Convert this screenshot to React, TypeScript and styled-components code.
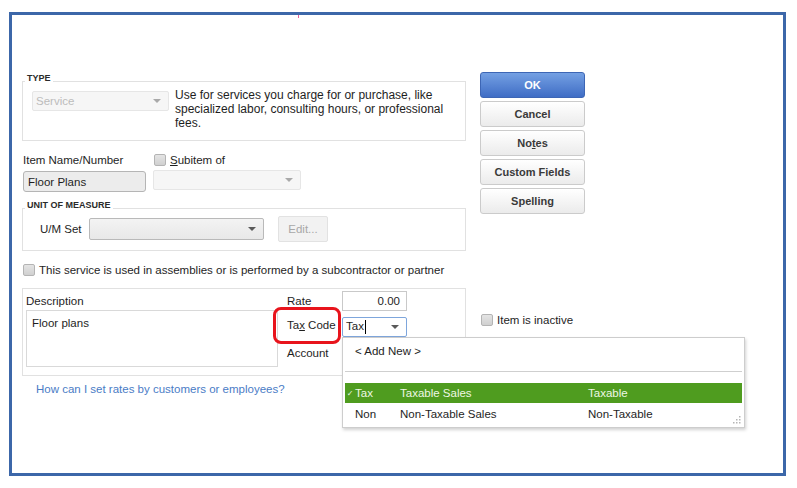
import React from "react";
import styled, { createGlobalStyle } from "styled-components";

const GlobalStyle = createGlobalStyle`
  html, body {
    margin: 0;
    padding: 0;
    background: #fff;
  }
  body {
    font-family: "Liberation Sans", Arial, sans-serif;
    font-size: 11.5px;
    color: #1e1e1e;
  }
`;

const Frame = styled.div`
  position: relative;
  box-sizing: border-box;
  width: 777px;
  height: 464px;
  margin: 12px 0 0 9px;
  border: 3px solid #3c67a9;
  padding: 57px 0 0 10px;
  display: flex;
  gap: 14px;
  align-items: flex-start;
`;

const Tick = styled.span`
  position: absolute;
  left: 286px;
  top: 0;
  width: 1px;
  height: 3px;
  background: #e7609a;
`;

const LeftCol = styled.div`
  width: 444px;
  display: flex;
  flex-direction: column;
`;

const RightCol = styled.div`
  width: 105px;
  display: flex;
  flex-direction: column;
`;

const GroupBox = styled.div`
  position: relative;
  border: 1px solid #e1e1e1;
`;

const GroupTitle = styled.span`
  position: absolute;
  left: 2px;
  top: -9px;
  padding: 0 2px;
  background: #fff;
  font-size: 9px;
  font-weight: bold;
  line-height: 10px;
  color: #2a2a2a;
`;

const TypeBox = styled(GroupBox)`
  margin-top: 9px;
  padding: 9px 10px 10px 9px;
  display: flex;
  gap: 6px;
  align-items: flex-start;
`;

const TypeText = styled.div`
  margin-top: -3px;
  font-size: 12px;
  line-height: 14px;
`;

const Select = styled.div<{ $w: number; $h?: number; $variant?: "disabled" | "plain" | "focus" }>`
  position: relative;
  box-sizing: border-box;
  flex: none;
  width: ${(p) => p.$w}px;
  height: ${(p) => p.$h ?? 20}px;
  display: flex;
  align-items: center;
  justify-content: space-between;
  padding: 0 7px 0 3px;
  border-radius: 2px;
  border: 1px solid
    ${(p) => (p.$variant === "focus" ? "#7ea6dc" : p.$variant === "plain" ? "#b9b9b9" : "#e6e6e6")};
  background: ${(p) =>
    p.$variant === "focus"
      ? "#fff"
      : p.$variant === "plain"
      ? "linear-gradient(#f3f3f3, #e8e8e8)"
      : "#f6f6f6"};
  color: ${(p) => (p.$variant === "disabled" ? "#bcbcbc" : "#1e1e1e")};
`;

const Arrow = styled.span<{ $muted?: boolean }>`
  width: 0;
  height: 0;
  border-left: 4px solid transparent;
  border-right: 4px solid transparent;
  border-top: 4px solid ${(p) => (p.$muted ? "#a9a9a9" : "#5a5a5a")};
`;

const NameRow = styled.div`
  margin-top: 12px;
  display: flex;
  gap: 7px;
  padding-left: 1px;
`;

const Column = styled.div`
  display: flex;
  flex-direction: column;
`;

const Label = styled.span`
  line-height: 14px;
  white-space: nowrap;
`;

const ItemInput = styled.div`
  margin-top: 4px;
  box-sizing: border-box;
  width: 123px;
  height: 21px;
  border: 1px solid #b5b5b5;
  border-radius: 3px;
  background: #ececec;
  padding: 0 4px;
  display: flex;
  align-items: center;
`;

const CheckRow = styled.div<{ $mt?: number }>`
  margin-top: ${(p) => p.$mt ?? 0}px;
  display: flex;
  align-items: center;
  gap: 4px;
  height: 14px;
  padding-left: 1px;
`;

const Check = styled.span`
  box-sizing: border-box;
  flex: none;
  width: 12px;
  height: 12px;
  border: 1px solid #b4b4b4;
  border-radius: 2px;
  background: linear-gradient(#e4e4e4, #d0d0d0);
`;

const SubitemSelect = styled(Select)`
  margin-top: 3px;
`;

const UomBox = styled(GroupBox)`
  margin-top: 16px;
  padding: 7px 10px 8px 17px;
  display: flex;
  align-items: center;
`;

const UomLabel = styled.span`
  width: 49px;
  line-height: 14px;
`;

const EditButton = styled.div`
  box-sizing: border-box;
  margin-left: 14px;
  width: 50px;
  height: 26px;
  border: 1px solid #e2e2e2;
  border-radius: 2px;
  background: #f2f2f2;
  color: #a8a8a8;
  display: flex;
  align-items: center;
  justify-content: center;
`;

const DetailBox = styled.div`
  margin-top: 11px;
  border: 1px solid #e1e1e1;
  padding: 0 0 8px 3px;
  display: flex;
  gap: 9px;
  align-items: flex-start;
`;

const DescCol = styled.div`
  padding-top: 5px;
  display: flex;
  flex-direction: column;
`;

const TextArea = styled.div`
  margin-top: 2px;
  box-sizing: border-box;
  width: 252px;
  height: 57px;
  border: 1px solid #d9d9d9;
  padding: 5px 5px;
  line-height: 14px;
`;

const FieldGrid = styled.div`
  margin-top: 2px;
  display: grid;
  grid-template-columns: 55px 65px;
  grid-auto-rows: 20px;
  row-gap: 6px;
  align-items: center;
`;

const HighlightLabel = styled.span`
  position: relative;
  top: -2px;
  line-height: 14px;
  white-space: nowrap;

  &::after {
    content: "";
    position: absolute;
    left: -14px;
    top: -11px;
    box-sizing: border-box;
    width: 68px;
    height: 37px;
    border: 3px solid #e8141c;
    border-radius: 8px;
  }
`;

const RateInput = styled.div`
  box-sizing: border-box;
  height: 20px;
  border: 1px solid #c9c9c9;
  background: #fff;
  padding-right: 6px;
  display: flex;
  align-items: center;
  justify-content: flex-end;
`;

const Caret = styled.span`
  display: inline-block;
  width: 1px;
  height: 14px;
  margin-left: 1px;
  vertical-align: middle;
  background: #000;
`;

const Dropdown = styled.div`
  position: absolute;
  z-index: 10;
  left: -1px;
  top: calc(100% + 1px);
  box-sizing: border-box;
  width: 403px;
  border: 1px solid #cdcdcd;
  background: #fff;
  padding: 0 2px 3px;
  box-shadow: 1px 2px 3px rgba(0, 0, 0, 0.18);
  color: #1e1e1e;
`;

const AddNew = styled.div`
  box-sizing: border-box;
  height: 34px;
  padding: 6px 0 0 10px;
  line-height: 14px;
  border-bottom: 1px solid #cfcfcf;
  margin-bottom: 11px;
`;

const ListRow = styled.div<{ $selected?: boolean }>`
  display: flex;
  align-items: center;
  height: ${(p) => (p.$selected ? 20 : 21)}px;
  background: ${(p) => (p.$selected ? "#4f9c1f" : "transparent")};
  color: ${(p) => (p.$selected ? "#eef7e4" : "#1e1e1e")};
`;

const CodeCell = styled.span`
  width: 55px;
  display: flex;
  align-items: center;
`;

const CheckMark = styled.span`
  width: 10px;
  font-family: "DejaVu Sans", sans-serif;
  font-size: 8px;
  text-align: center;
`;

const NameCell = styled.span`
  width: 188px;
`;

const Grip = styled.svg`
  position: absolute;
  right: 3px;
  bottom: 3px;
`;

const Link = styled.a`
  margin: 6px 0 0 14px;
  line-height: 14px;
  color: #4a7cc6;
  text-decoration: none;
`;

const ButtonStack = styled.div`
  display: flex;
  flex-direction: column;
  gap: 3px;
`;

const Button = styled.button<{ $primary?: boolean }>`
  box-sizing: border-box;
  width: 105px;
  height: 26px;
  padding: 0;
  border-radius: 3px;
  font-family: inherit;
  font-size: 11px;
  font-weight: bold;
  border: 1px solid ${(p) => (p.$primary ? "#3d66b5" : "#cbcbcb")};
  background: ${(p) =>
    p.$primary ? "linear-gradient(#74a0e3, #3f6dc5)" : "linear-gradient(#ffffff, #ebebeb)"};
  color: ${(p) => (p.$primary ? "#fff" : "#3a3a3a")};
`;

const codes = [
  { code: "Tax", name: "Taxable Sales", type: "Taxable", selected: true },
  { code: "Non", name: "Non-Taxable Sales", type: "Non-Taxable", selected: false },
];

export default function App() {
  return (
    <>
      <GlobalStyle />
      <Frame>
        <Tick />
        <LeftCol>
          <TypeBox>
            <GroupTitle>TYPE</GroupTitle>
            <Select $w={137} $variant="disabled">
              Service
              <Arrow $muted />
            </Select>
            <TypeText>
              Use for services you charge for or purchase, like
              <br />
              specialized labor, consulting hours, or professional
              <br />
              fees.
            </TypeText>
          </TypeBox>

          <NameRow>
            <Column>
              <Label>Item Name/Number</Label>
              <ItemInput>Floor Plans</ItemInput>
            </Column>
            <Column>
              <CheckRow>
                <Check />
                <Label>
                  <u>S</u>ubitem of
                </Label>
              </CheckRow>
              <SubitemSelect $w={148} $variant="disabled">
                <span />
                <Arrow $muted />
              </SubitemSelect>
            </Column>
          </NameRow>

          <UomBox>
            <GroupTitle>UNIT OF MEASURE</GroupTitle>
            <UomLabel>U/M Set</UomLabel>
            <Select $w={175} $h={22} $variant="plain">
              <span />
              <Arrow />
            </Select>
            <EditButton>Edit...</EditButton>
          </UomBox>

          <CheckRow $mt={12}>
            <Check />
            <Label>This service is used in assemblies or is performed by a subcontractor or partner</Label>
          </CheckRow>

          <DetailBox>
            <DescCol>
              <Label>Description</Label>
              <TextArea>Floor plans</TextArea>
            </DescCol>
            <FieldGrid>
              <Label>Rate</Label>
              <RateInput>0.00</RateInput>
              <HighlightLabel>
                Ta<u>x</u> Code
              </HighlightLabel>
              <Select $w={65} $variant="focus">
                <span>
                  Tax
                  <Caret />
                </span>
                <Arrow />
                <Dropdown>
                  <AddNew>&lt; Add New &gt;</AddNew>
                  {codes.map((c) => (
                    <ListRow key={c.code} $selected={c.selected}>
                      <CodeCell>
                        <CheckMark>{c.selected ? "✓" : ""}</CheckMark>
                        {c.code}
                      </CodeCell>
                      <NameCell>{c.name}</NameCell>
                      <span>{c.type}</span>
                    </ListRow>
                  ))}
                  <Grip width="8" height="8" viewBox="0 0 8 8">
                    <g fill="#b5b5b5">
                      <rect x="6" y="0" width="1.5" height="1.5" />
                      <rect x="3" y="3" width="1.5" height="1.5" />
                      <rect x="6" y="3" width="1.5" height="1.5" />
                      <rect x="0" y="6" width="1.5" height="1.5" />
                      <rect x="3" y="6" width="1.5" height="1.5" />
                      <rect x="6" y="6" width="1.5" height="1.5" />
                    </g>
                  </Grip>
                </Dropdown>
              </Select>
              <Label>Account</Label>
            </FieldGrid>
          </DetailBox>

          <Link>How can I set rates by customers or employees?</Link>
        </LeftCol>

        <RightCol>
          <ButtonStack>
            <Button $primary>OK</Button>
            <Button>Cancel</Button>
            <Button>
              No<u>t</u>es
            </Button>
            <Button>Custom Fields</Button>
            <Button>
              Spellin<u>g</u>
            </Button>
          </ButtonStack>
          <CheckRow $mt={99}>
            <Check />
            <Label>Item is inactive</Label>
          </CheckRow>
        </RightCol>
      </Frame>
    </>
  );
}
